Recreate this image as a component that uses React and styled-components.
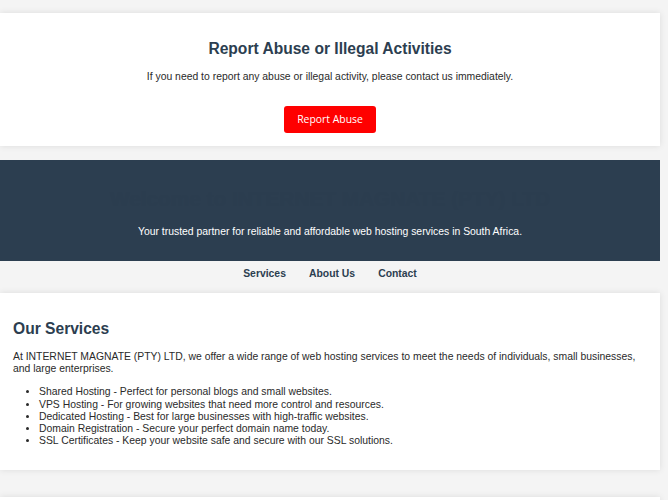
import React from "react";
import styled, { createGlobalStyle } from "styled-components";

const Global = createGlobalStyle`
  html, body { margin: 0; padding: 0; }
  body {
    background: #f4f4f4;
    font-family: "Liberation Sans", Arial, sans-serif;
    font-size: 10.4px;
    line-height: 12.27px;
    color: #2a2a2a;
  }
  * { box-sizing: border-box; }
`;

const Page = styled.div`
  padding-right: 8px;
  display: flex;
  flex-direction: column;
`;

const Card = styled.section`
  background: #fff;
  padding: 13.33px 13px;
  margin: 13.33px 0;
  box-shadow: 0 0 6.5px rgba(0, 0, 0, 0.1);
  text-align: ${(p) => (p.$center ? "center" : "left")};
`;

const Heading = styled.h2`
  font-size: 15.6px;
  font-weight: bold;
  color: #2c3e50;
  margin: 13px 0;
  line-height: 18.4px;
`;

const Text = styled.p`
  margin: 10.67px 0;
`;

const AbuseButton = styled.a`
  display: inline-block;
  margin-top: 11.7px;
  padding: 6.67px 13px;
  background: #ff0000;
  color: #fff;
  font-family: "Open Sans", sans-serif;
  font-size: 10.4px;
  line-height: 14px;
  border-radius: 3px;
  text-decoration: none;
`;

const Banner = styled.header`
  background: #2c3e50;
  color: #fff;
  text-align: center;
  padding: 13.33px 13px 11.8px;
`;

const BannerTitle = styled.h1`
  font-size: 20.8px;
  font-weight: bold;
  margin: 14.3px 0;
  line-height: 24.5px;
  color: #2b3d4f;
`;

const Nav = styled.nav`
  display: flex;
  justify-content: center;
  gap: 23px;
  padding-top: 7px;
`;

const NavLink = styled.a`
  color: #2c3e50;
  font-weight: bold;
  text-decoration: none;
  line-height: 12.27px;
`;

const List = styled.ul`
  margin: 10.67px 0 9.5px;
  padding-left: 26px;
`;

const services = [
  "Shared Hosting - Perfect for personal blogs and small websites.",
  "VPS Hosting - For growing websites that need more control and resources.",
  "Dedicated Hosting - Best for large businesses with high-traffic websites.",
  "Domain Registration - Secure your perfect domain name today.",
  "SSL Certificates - Keep your website safe and secure with our SSL solutions.",
];

export default function App() {
  return (
    <>
      <Global />
      <Page>
        <Card $center>
          <Heading>Report Abuse or Illegal Activities</Heading>
          <Text>If you need to report any abuse or illegal activity, please contact us immediately.</Text>
          <div>
            <AbuseButton href="#">Report Abuse</AbuseButton>
          </div>
        </Card>
        <Banner>
          <BannerTitle>Welcome to INTERNET MAGNATE (PTY) LTD</BannerTitle>
          <Text>Your trusted partner for reliable and affordable web hosting services in South Africa.</Text>
        </Banner>
        <Nav>
          <NavLink href="#">Services</NavLink>
          <NavLink href="#">About Us</NavLink>
          <NavLink href="#">Contact</NavLink>
        </Nav>
        <Card>
          <Heading>Our Services</Heading>
          <Text>
            At INTERNET MAGNATE (PTY) LTD, we offer a wide range of web hosting services to meet the needs of individuals, small businesses, and large enterprises.
          </Text>
          <List>
            {services.map((s) => (
              <li key={s}>{s}</li>
            ))}
          </List>
        </Card>
        <Card>
          <Heading>About Us</Heading>
        </Card>
      </Page>
    </>
  );
}
